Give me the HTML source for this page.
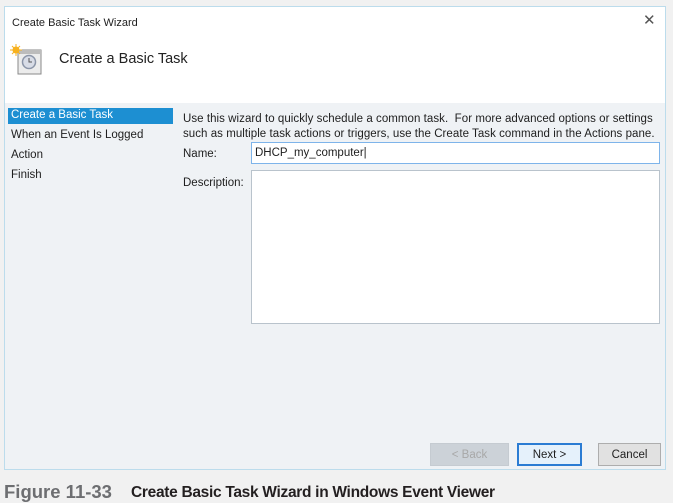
<!DOCTYPE html>
<html><head><meta charset="utf-8"><style>
html,body{margin:0;padding:0}
body{width:673px;height:502px;background:#f1f1f1;position:relative;overflow:hidden;font-family:"Liberation Sans",sans-serif;color:#1e1e1e}
*{box-sizing:border-box}
.win{position:absolute;left:4px;top:6px;width:662px;height:464px;border:1px solid #bcdcec;background:#eff2f5}
.head{position:absolute;left:0;top:0;width:660px;height:96px;background:#fff}
.t{position:absolute;font-size:11.5px;white-space:nowrap}
.sel{position:absolute;left:3px;top:101px;width:165px;height:16px;background:#1d8fd2}
.box{position:absolute;background:#fff;border:1px solid #b9c3cc}
.btn{position:absolute;top:436px;height:23px;border:1px solid #adadad;background:#e1e1e1;font-size:11.5px;text-align:center;line-height:23px}
</style></head><body>
<div class="win">
 <div class="head"></div>
 <div class="t" style="left:7px;top:10px;font-size:11px">Create Basic Task Wizard</div>
 <div class="t" style="left:638px;top:4px;font-size:15px;color:#555">✕</div>
 <svg style="position:absolute;left:5px;top:37px" width="34" height="34" viewBox="0 0 34 34">
  <rect x="8" y="6" width="23" height="24" fill="#ececec" stroke="#8a8a8a"/>
  <rect x="8" y="6" width="23" height="4" fill="#bcbcbc"/>
  <circle cx="19" cy="18" r="6.5" fill="#d8dce6" stroke="#8b95a8" stroke-width="1.5"/>
  <path d="M19 14v4h3" stroke="#555" fill="none"/>
  <circle cx="6" cy="6" r="3.5" fill="#f7b11e"/>
  <path d="M6 0v12M0 6h12M2 2l8 8M10 2l-8 8" stroke="#f7b11e" stroke-width="1"/>
 </svg>
 <div class="t" style="left:54px;top:44px;font-size:14.5px;color:#222">Create a Basic Task</div>
 <div class="sel"></div>
 <div class="t" style="left:6px;top:102px;color:#fff">Create a Basic Task</div>
 <div class="t" style="left:6px;top:122px">When an Event Is Logged</div>
 <div class="t" style="left:6px;top:142px">Action</div>
 <div class="t" style="left:6px;top:162px">Finish</div>
 <div class="t" style="left:178px;top:105px;line-height:15px;letter-spacing:0.05px">Use this wizard to quickly schedule a common task.&nbsp; For more advanced options or settings<br>such as multiple task actions or triggers, use the Create Task command in the Actions pane.</div>
 <div class="t" style="left:178px;top:141px">Name:</div>
 <div class="box" style="left:246px;top:135px;width:409px;height:22px;border-color:#7eb4ea"></div>
 <div class="t" style="left:250px;top:140px">DHCP_my_computer|</div>
 <div class="t" style="left:178px;top:170px">Description:</div>
 <div class="box" style="left:246px;top:163px;width:409px;height:154px"></div>
 <div class="btn" style="left:425px;width:79px;color:#a8a8a8;background:#ccd2d8;border-color:#c5cbd1">&lt; Back</div>
 <div class="btn" style="left:512px;width:65px;border:2px solid #2b7cd3;background:#e5f1fb;line-height:21px">Next &gt;</div>
 <div class="btn" style="left:593px;width:63px">Cancel</div>
</div>
<div class="t" style="left:4px;top:481px;font-size:18.5px;font-weight:bold;color:#6d6e71">Figure 11-33</div>
<div class="t" style="left:131px;top:484px;font-size:15.5px;font-weight:bold;color:#231f20;letter-spacing:-0.3px">Create Basic Task Wizard in Windows Event Viewer</div>
</body></html>
